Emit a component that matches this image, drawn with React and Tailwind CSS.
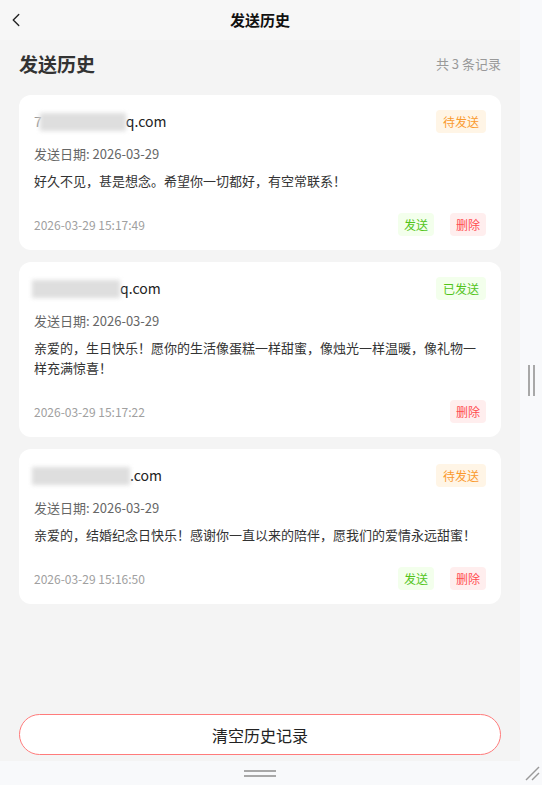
import { ChevronLeft } from "lucide-react";

const records = [
  {
    pre: "7",
    mask: 86,
    post: "q.com",
    status: "pending",
    date: "2026-03-29",
    msg: "好久不见，甚是想念。希望你一切都好，有空常联系！",
    time: "2026-03-29 15:17:49",
  },
  {
    pre: "",
    mask: 88,
    post: "q.com",
    status: "sent",
    date: "2026-03-29",
    msg: "亲爱的，生日快乐！愿你的生活像蛋糕一样甜蜜，像烛光一样温暖，像礼物一样充满惊喜！",
    time: "2026-03-29 15:17:22",
  },
  {
    pre: "",
    mask: 98,
    post: ".com",
    status: "pending",
    date: "2026-03-29",
    msg: "亲爱的，结婚纪念日快乐！感谢你一直以来的陪伴，愿我们的爱情永远甜蜜！",
    time: "2026-03-29 15:16:50",
  },
];

function Badge({ status }) {
  if (status === "sent") {
    return (
      <span className="h-[23px] px-[7px] rounded-[4px] bg-[#f3ffec] text-[#52c41a] text-[12px] leading-[23px]">
        已发送
      </span>
    );
  }
  return (
    <span className="h-[23px] px-[7px] rounded-[4px] bg-[#fff5e6] text-[#fa9a2e] text-[12px] leading-[23px]">
      待发送
    </span>
  );
}

function RecordCard({ r }) {
  return (
    <div className="bg-white rounded-[12px] px-[15px] pt-[15px] pb-[14px]">
      <div className="flex items-center justify-between h-[23px]">
        <div className="flex items-center text-[14px] text-[#222]">
          {r.pre && <span className="text-[#999]">{r.pre}</span>}
          <span
            className="inline-block h-[18px] bg-[#dedede] blur-[2px] -ml-[2px]"
            style={{ width: r.mask }}
          />
          <span>{r.post}</span>
        </div>
        <Badge status={r.status} />
      </div>
      <div className="mt-[11px] text-[13px] leading-[19px] text-[#666]">
        发送日期: {r.date}
      </div>
      <div className="mt-[8px] text-[13px] leading-[20px] text-[#333]">{r.msg}</div>
      <div className="mt-[22px] flex items-center justify-between h-[23px]">
        <span className="text-[12px] text-[#a0a0a0]">{r.time}</span>
        <div className="flex items-center gap-[16px]">
          {r.status === "pending" && (
            <button className="h-[23px] px-[6px] rounded-[4px] bg-[#f3ffec] text-[#52c41a] text-[12px]">
              发送
            </button>
          )}
          <button className="h-[23px] px-[6px] rounded-[4px] bg-[#ffeeee] text-[#ff4d4f] text-[12px]">
            删除
          </button>
        </div>
      </div>
    </div>
  );
}

export default function App() {
  return (
    <div className="w-[542px] h-[785px] flex flex-col bg-[#f8f9fb] font-['Noto_Sans_CJK_SC','Noto_Sans',sans-serif] overflow-hidden">
      <div className="flex flex-1 min-h-0">
        <div className="w-[520px] flex flex-col">
          <div className="h-[40px] bg-[#f7f7f7] flex items-center relative">
            <ChevronLeft size={22} strokeWidth={1.5} className="absolute left-[5px] text-[#222]" />
            <div className="flex-1 text-center text-[15px] font-bold text-[#111]">发送历史</div>
          </div>
          <div className="flex-1 bg-[#f4f4f4] flex flex-col px-[19px]">
            <div className="pt-[11px] h-[26px] flex items-center justify-between mb-[18px] box-content">
              <span className="text-[19px] font-bold text-[#333]">发送历史</span>
              <span className="text-[13px] text-[#999]">共 3 条记录</span>
            </div>
            <div className="flex-1 flex flex-col gap-[12px]">
              {records.map((r, i) => (
                <RecordCard key={i} r={r} />
              ))}
            </div>
            <button className="mb-[6px] h-[41px] w-full rounded-full border border-[#ff7b7b] bg-white text-[16px] text-[#222]">
              清空历史记录
            </button>
          </div>
        </div>
        <div className="flex-1 flex items-center justify-center gap-[3px]">
          <span className="w-[2px] h-[31px] bg-[#a8a8a8]" />
          <span className="w-[2px] h-[31px] bg-[#a8a8a8]" />
        </div>
      </div>
      <div className="h-[24px] flex items-center relative">
        <div className="w-[520px] flex flex-col items-center gap-[3px]">
          <span className="w-[32px] h-[2px] bg-[#a8a8a8]" />
          <span className="w-[32px] h-[2px] bg-[#a8a8a8]" />
        </div>
        <svg width="16" height="16" viewBox="0 0 16 16" className="absolute right-[2px] bottom-[4px]">
          <line x1="2" y1="15" x2="15" y2="2" stroke="#9a9a9a" strokeWidth="1.5" />
          <line x1="8" y1="15" x2="15" y2="8" stroke="#9a9a9a" strokeWidth="1.5" />
        </svg>
      </div>
    </div>
  );
}
